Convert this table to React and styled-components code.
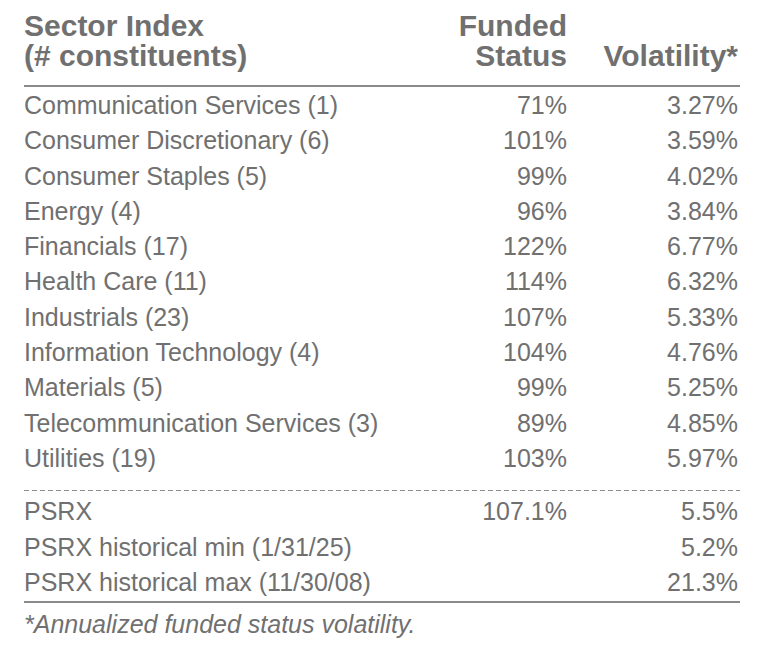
import React from 'react';
import styled, { createGlobalStyle } from 'styled-components';

const GlobalStyle = createGlobalStyle`
  html, body {
    margin: 0;
    padding: 0;
    background: #ffffff;
  }
  body {
    font-family: "Liberation Sans", Arial, sans-serif;
    color: #707070;
  }
`;

const Wrap = styled.div`
  width: 716px;
  padding: 11px 0 0 24px;
`;

const Grid = styled.div`
  display: grid;
  grid-template-columns: 1fr 150px 171px;
`;

const HeadCell = styled.div`
  font-size: 30px;
  line-height: 30px;
  font-weight: bold;
  color: #707070;
  text-align: ${(p) => (p.right ? 'right' : 'left')};
  padding-right: ${(p) => (p.right ? '2px' : '0')};
  padding-bottom: 14px;
  align-self: end;
  white-space: nowrap;
`;

const HeadRule = styled.div`
  grid-column: 1 / -1;
  height: 2px;
  background: #8a8a8a;
  margin-bottom: 1px;
`;

const DashRule = styled.div`
  grid-column: 1 / -1;
  height: 1px;
  margin: 14px 0 3px;
  background-image: linear-gradient(to right, #8a8a8a 0 5px, transparent 5px 8px);
  background-size: 8px 1px;
  background-repeat: repeat-x;
`;

const BottomRule = styled.div`
  grid-column: 1 / -1;
  height: 2px;
  margin-top: 1px;
  background: #8a8a8a;
`;

const Cell = styled.div`
  font-size: 25px;
  line-height: 35.3px;
  text-align: ${(p) => (p.right ? 'right' : 'left')};
  padding-right: ${(p) => (p.right ? '2px' : '0')};
  white-space: nowrap;
`;

const Note = styled.div`
  font-size: 25px;
  font-style: italic;
  line-height: 30px;
  margin-top: 6px;
`;

const sectors = [
  ['Communication Services (1)', '71%', '3.27%'],
  ['Consumer Discretionary (6)', '101%', '3.59%'],
  ['Consumer Staples (5)', '99%', '4.02%'],
  ['Energy (4)', '96%', '3.84%'],
  ['Financials (17)', '122%', '6.77%'],
  ['Health Care (11)', '114%', '6.32%'],
  ['Industrials (23)', '107%', '5.33%'],
  ['Information Technology (4)', '104%', '4.76%'],
  ['Materials (5)', '99%', '5.25%'],
  ['Telecommunication Services (3)', '89%', '4.85%'],
  ['Utilities (19)', '103%', '5.97%'],
];

const summary = [
  ['PSRX', '107.1%', '5.5%'],
  ['PSRX historical min (1/31/25)', '', '5.2%'],
  ['PSRX historical max (11/30/08)', '', '21.3%'],
];

const renderRow = ([name, funded, vol]) => (
  <React.Fragment key={name}>
    <Cell>{name}</Cell>
    <Cell right>{funded}</Cell>
    <Cell right>{vol}</Cell>
  </React.Fragment>
);

const App = () => (
  <>
    <GlobalStyle />
    <Wrap>
      <Grid>
        <HeadCell>
          Sector Index
          <br />
          (# constituents)
        </HeadCell>
        <HeadCell right>
          Funded
          <br />
          Status
        </HeadCell>
        <HeadCell right>Volatility*</HeadCell>
        <HeadRule />
        {sectors.map(renderRow)}
        <DashRule />
        {summary.map(renderRow)}
        <BottomRule />
      </Grid>
      <Note>*Annualized funded status volatility.</Note>
    </Wrap>
  </>
);

export default App;
